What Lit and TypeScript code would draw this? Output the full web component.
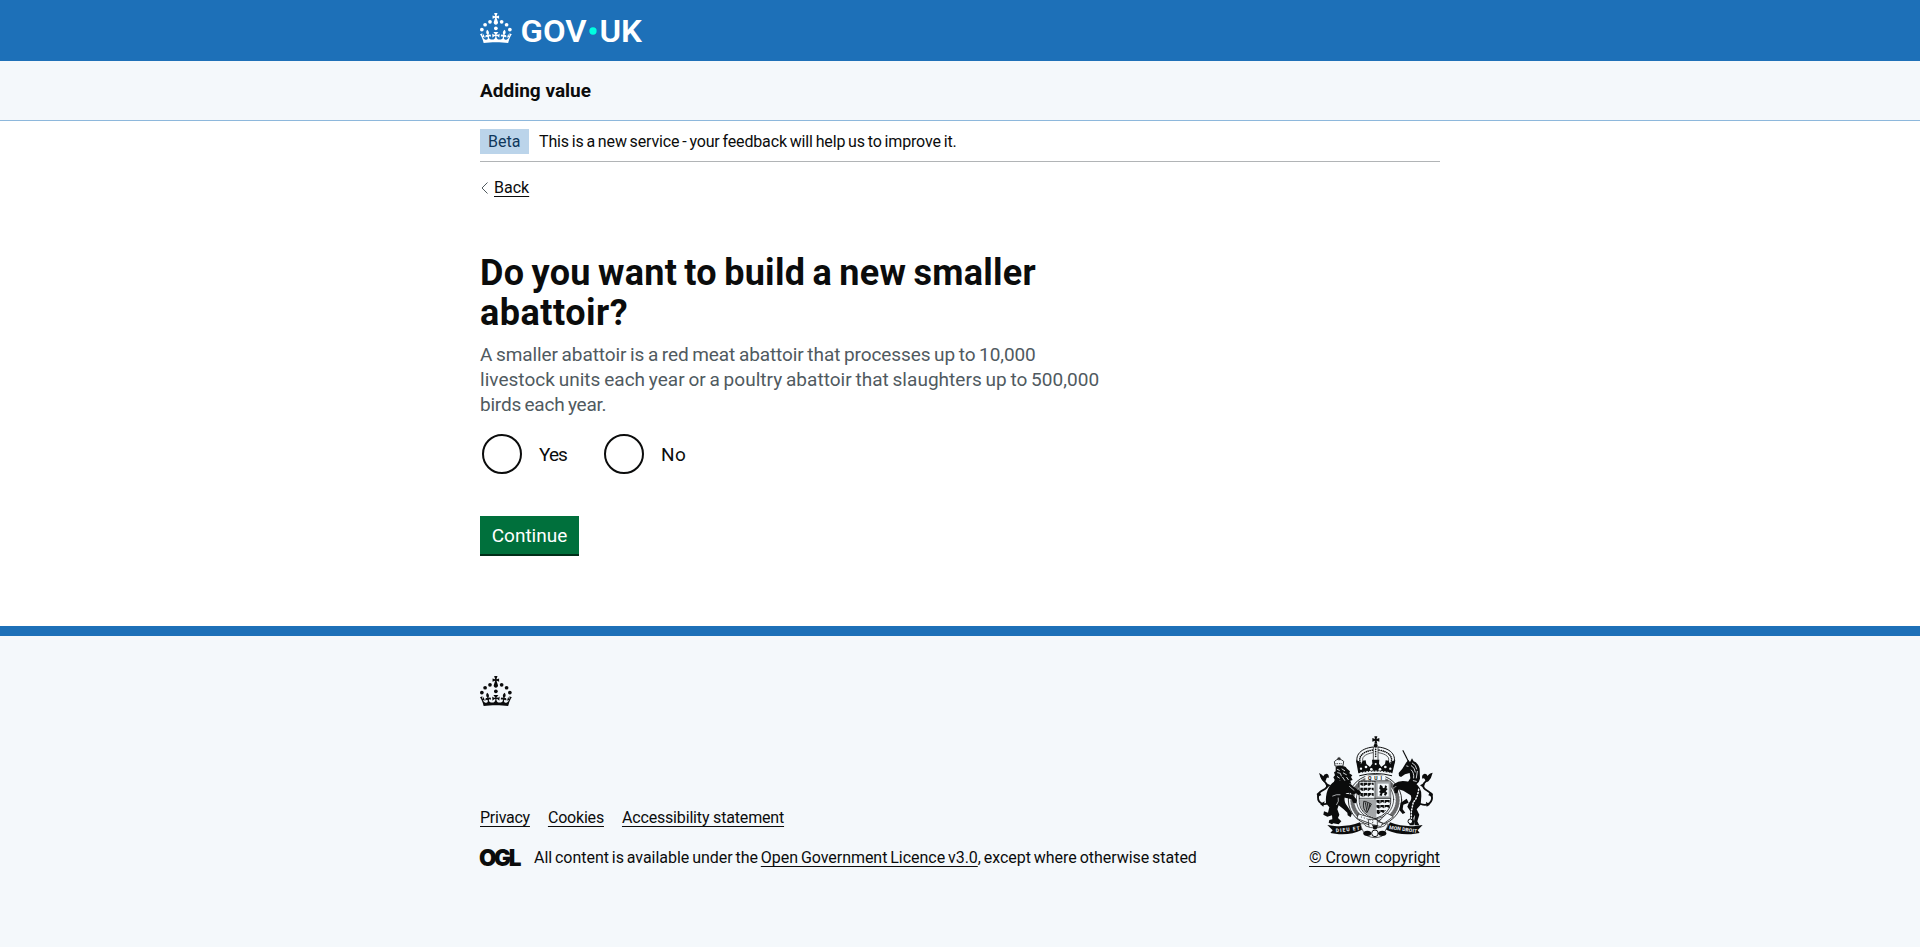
import { LitElement, html, css, svg } from "lit";
import { customElement, property } from "lit/decorators.js";

const crownShapes = svg`
  <circle cx="20" cy="17.6" r="3.7"></circle>
  <circle cx="10.2" cy="23.5" r="3.7"></circle>
  <circle cx="3.7" cy="33.2" r="3.7"></circle>
  <circle cx="31.7" cy="30.6" r="3.7"></circle>
  <circle cx="43.3" cy="17.6" r="3.7"></circle>
  <circle cx="53.2" cy="23.5" r="3.7"></circle>
  <circle cx="59.7" cy="33.2" r="3.7"></circle>
  <path d="M33.1,9.8c.2-.1.3-.3.5-.5l4.6,2.4v-6.8l-4.6,1.5c-.1-.2-.3-.3-.5-.5l1.9-5.9h-6.7l1.9,5.9c-.2.1-.3.3-.5.5l-4.6-1.5v6.8l4.6-2.4c.1.2.3.3.5.5l-2.6,8c-.9,2.8,1.2,5.7,4.1,5.7h0c3,0,5.1-2.9,4.1-5.7l-2.6-8ZM37,37.9s-3.4,3.8-4.1,6.1c2.2,0,4.2-.5,6.4-2.8l-.7,8.5c-2-2.8-4.4-4.1-5.7-3.8.1,3.1.5,6.7,5.8,7.2,3.7.3,6.7-1.5,7-3.8.4-2.6-2-4.3-3.7-1.6-1.4-4.5,2.4-6.1,4.9-3.2-1.9-4.5-1.8-7.7,2.4-10.9,3,4,2.6,7.3-1.2,11.1,2.4-1.3,6.2,0,4,4.6-1.2-2.8-3.7-2.2-4.2.2-.3,1.7.7,3.7,3,4.2,1.9.3,4.7-.9,7-5.9-1.3,0-2.4.7-3.9,1.7l2.4-8c.6,2.3,1.4,3.7,2.2,4.5.6-1.6.5-2.8,0-5.3l5,1.8c-2.6,3.6-5.2,8.7-7.3,17.5-7.4-1.1-15.7-1.7-24.5-1.7h0c-8.8,0-17.1.6-24.5,1.7-2.1-8.9-4.7-13.9-7.3-17.5l5-1.8c-.5,2.5-.6,3.7,0,5.3.8-.8,1.6-2.3,2.2-4.5l2.4,8c-1.5-1-2.6-1.7-3.9-1.7,2.3,5,5.2,6.2,7,5.9,2.3-.4,3.3-2.4,3-4.2-.5-2.4-3-3.1-4.2-.2-2.2-4.6,1.6-6,4-4.6-3.7-3.7-4.2-7.1-1.2-11.1,4.2,3.2,4.3,6.4,2.4,10.9,2.5-2.8,6.3-1.3,4.9,3.2-1.8-2.7-4.1-1-3.7,1.6.3,2.3,3.3,4.1,7,3.8,5.4-.5,5.7-4.2,5.8-7.2-1.3-.2-3.7,1-5.7,3.8l-.7-8.5c2.2,2.3,4.2,2.7,6.4,2.8-.7-2.3-4.1-6.1-4.1-6.1h10.6Z"></path>`;

@customElement("gov-crown")
class GovCrown extends LitElement {
  static styles = css`
    :host { display: block; width: 32px; height: 30px; }
    svg { display: block; fill: currentColor; }
  `;
  render() {
    return html`<svg width="32" height="30" viewBox="0 0 64 60">${crownShapes}</svg>`;
  }
}

@customElement("gov-logo")
class GovLogo extends LitElement {
  static styles = css`
    :host { display: block; }
    svg { display: block; fill: #fff; overflow: visible; }
    text { font: 600 62px Roboto, sans-serif; }
    .dot { fill: #00ffe0; }
  `;
  render() {
    return html`<svg width="162" height="30" viewBox="0 0 324 60">
      ${crownShapes}
      <text x="81" y="58" textLength="132" lengthAdjust="spacingAndGlyphs">GOV</text>
      <circle class="dot" cx="226" cy="36" r="7.3"></circle>
      <text x="239" y="58" textLength="85" lengthAdjust="spacingAndGlyphs">UK</text>
    </svg>`;
  }
}

@customElement("royal-arms")
class RoyalArms extends LitElement {
  static styles = css`
    :host { display: block; }
    svg { display: block; }
    .k { fill: #0b0c0c; }
    .w { fill: #f4f8fb; }
    .l { fill: none; stroke: #0b0c0c; stroke-linecap: round; stroke-linejoin: round; }
    .w.l { fill: #f4f8fb; }
    .p { fill: none; stroke: #f4f8fb; stroke-linecap: round; stroke-linejoin: round; }
    .g { fill: #a3a6a8; }
    text { font: 700 15px Roboto, sans-serif; }
  `;
  render() {
    return html`<svg width="118" height="103" viewBox="48 32 354 309">
      <!-- garter -->
      <ellipse class="w l" cx="225" cy="224" rx="80" ry="76" stroke-width="2.5"></ellipse>
      <ellipse class="l" cx="225" cy="224" rx="68" ry="66" stroke-width="12" stroke-dasharray="3.5 5" stroke-opacity=".6" stroke-linecap="butt"></ellipse>
      <ellipse class="w l" cx="225" cy="222" rx="56" ry="58" stroke-width="2"></ellipse>
      <rect class="w" x="196" y="150" width="60" height="15"></rect>
      <text class="k" x="204" y="163" textLength="42">QUI</text>

      <!-- shield -->
      <path class="w l" stroke-width="2.5" d="M178 168H272V232Q270 266 225 280Q180 266 178 232Z"></path>
      <path class="g" d="M226 168H272V220H226ZM179 222H224V278Q182 262 179 232Z"></path>
      <rect class="w" x="233" y="175" width="33" height="38"></rect>
      <path class="k" d="M181 172h40v8l-8-3-6 5-8-4-8 5-10-4zM181 187h40v9l-9-4-7 5-7-4-8 5-9-4zM181 203h40v10l-9-4-7 5-7-4-8 5-9-4z"></path>
      <path class="k" d="M229 224h40v8l-8-3-6 5-8-4-8 5-10-4zM229 239h39v9l-9-4-7 5-7-4-8 5-8-4zM230 254h28l-8 9-7-4-7 8-6-3z"></path>
      <path class="p" stroke-width="2" d="M190 170v44M203 170v44M214 170v44M240 223v36M253 223v34"></path>
      <path class="k" d="M240 178l7 4 2 7 5-2 1-7 6 3-2 6 4 2-6 7 5 5-5 8-5-2 2-7-6 1-3 9-7-2 4-7-5-3 5-6-4-4z"></path>
      <path class="l" stroke-width="2.5" d="M191 229q-4 24 10 33l13-26-16-7zM196 232l5 26M202 234l3 18M208 236l1 8"></path>
      <path class="l" stroke-width="2" d="M225 168V278M178 219H272"></path>
      <path class="g" d="M222 222h7v54l-4 3-3-3z"></path>

      <!-- crown -->
      <path class="k" d="M223 33h9l-2 8 8-3v11l-8-3 2 9h-9l2-9-8 3V38l8 3z"></path>
      <circle class="k" cx="227" cy="61" r="6"></circle>
      <path class="l" stroke-width="3" d="M177 124C160 96 176 69 220 65M277 124C294 96 278 69 234 65"></path>
      <path class="l" stroke-width="5" stroke-dasharray=".1 6" d="M184 118C171 96 186 79 218 74M270 118C283 96 268 79 236 74"></path>
      <path class="l" stroke-width="2" d="M191 112C180 96 196 86 218 82M263 112C274 96 258 86 236 82"></path>
      <path class="l" stroke-width="2" d="M220 66V104M234 66V104"></path>
      <path class="l" stroke-width="5" stroke-dasharray=".1 7" d="M227 72V100"></path>
      <path class="k" d="M168 105l10 3 5 9 5-11 9-1 2 11 11 9 7-10-1-12h22l-1 12 7 10 11-9 2-11 9 1 5 11 5-9 10-3-9 39q-49-11-102 0z"></path>
      <circle class="w" cx="198" cy="125" r="4"></circle><circle class="w" cx="256" cy="125" r="4"></circle>
      <circle class="w" cx="214" cy="132" r="4"></circle><circle class="w" cx="240" cy="132" r="4"></circle>
      <circle class="w" cx="183" cy="130" r="3.5"></circle><circle class="w" cx="271" cy="130" r="3.5"></circle>
      <circle class="w" cx="227" cy="116" r="3"></circle>
      <path class="p" stroke-width="3" stroke-dasharray="4 5" d="M181 143q46-11 92 0"></path>
      <path class="l" stroke-width="3" d="M179 151q48-13 96 0"></path>

      <!-- lion -->
      <path class="l" stroke-width="2.5" d="M105 121l-2-12q5-6 13-8 10 2 15 7l-2 13zM117 96v8M113 99h8"></path>
      <path class="l" stroke-width="3" stroke-dasharray=".1 5" d="M108 115h18"></path>
      <path class="k" d="M107 124q10-5 25-1 6 1 9 7l9 8-2 6 9 6-4 5 5 9-7 2 3 9-8-1-2 8-9-3-6 6-7-5-9 3-4-9-7-4 2-7-4-7 5-6-3-9 5-3z"></path>
      <path class="p" stroke-width="2.5" d="M112 132l6 3M126 131l8 5M113 142l8 2 3 8M130 143l9 5M112 154l6 4M128 156l6 9M140 156l5 7M120 166l4 6"></path>
      <path class="k" d="M104 168C120 162 148 168 158 182L180 198 184 204 176 210 168 204 158 208 150 202 138 204C130 220 134 232 140 240L148 252 156 264 152 276 143 270 142 262 131 252 116 240 112 252 118 268 114 278 124 288 116 297 100 294 96 297 86 292 88 284 97 282 96 270 82 274 70 268 72 258 84 262 88 246 78 234C76 206 84 180 104 168Z"></path>
      <path class="k" d="M128 204l30 4 13 16-3 10-9-2-4-10-26-6z"></path>
      <path class="p" stroke-width="2" d="M98 212q12-6 22-4M110 238q8-10 5-20M148 183l14 12"></path>
      <path class="l" stroke-width="5.5" d="M86 232C66 244 50 228 55 208C59 190 84 196 81 180C79 168 66 168 64 154"></path>
      <path class="k" d="M57 143q9 4 13 10 2-8 10-8 8 2 6 13-6-4-8 6-3 8-10 2-7-8-11-23zM50 206q10-10 14 4-6-1-10 8zM60 236l14-8-4 16zM76 172l16 8-12 8z"></path>

      <!-- unicorn -->
      <path class="l" stroke-width="3.5" stroke-linecap="butt" stroke-dasharray="4 1.2" d="M309 76L325 108"></path>
      <path class="k" d="M318 112l7-8 5 6 6-11 5 9q14 5 18 22l1 30q-2 12-12 18l-14 4-12-9 9-14-2-16-14 4-12 8-6-3-1-9 11-13z"></path>
      <path class="p" stroke-width="2.5" d="M337 113q12 6 13 18M334 121q11 6 12 19M334 134q9 8 7 24M352 138l-3 20M340 166l9 2M320 122l4 1"></path>
      <path class="k" d="M282 176Q298 164 318 168L344 172Q366 186 364 212L362 238 350 252 358 268 352 288 358 300 344 300 342 288 345 270 330 256 322 244 326 234Q338 222 332 210L310 196 296 192 292 204 284 204 282 190 290 182 278 186ZM326 232L310 238 308 252 316 262 308 266 298 254 302 232 320 220Z"></path>
      <path class="k" d="M336 256l14 4-10 18 3 14-2 8h-12l-2-8 6-5-2-14z"></path>
      <path class="l" stroke-width="5.5" d="M362 236C384 244 400 230 395 210C390 192 368 198 370 180C372 166 386 168 388 152"></path>
      <path class="k" d="M398 142q-12 2-15 10-4-8-11-6-8 3-5 14 6-4 9 5 3 8 10 2 8-8 12-25zM399 206q-10-10-14 4 7 0 10 8zM390 238l-12-9 2 15zM374 172l-14 8 11 8z"></path>
      <path class="l" stroke-width="8" d="M356 192Q352 220 340 230L334 258V282"></path>
      <path class="p" stroke-width="4.5" stroke-dasharray="3 6" d="M356 192Q352 220 340 230L334 258V282"></path>
      <circle class="w l" cx="331" cy="288" r="7" stroke-width="3"></circle>

      <!-- garter buckle -->
      <path class="w l" stroke-width="2" d="M176 266l48 14 24 14-6 10-22-6-48-18zM206 282h26v28l-12 6-12-8zM262 264l18 10-28 20-16-4z"></path>
      <path class="l" stroke-width="3" stroke-dasharray=".1 9" d="M184 275l42 14M218 292v18"></path>

      <!-- motto scroll -->
      <path class="k" d="M82 299l22 3q40 3 76-11l6 22q-36 18-80 12l-15-2 7-8zM368 299l-22 3q-40 3-76-11l-12 22q42 18 86 12l15-2-6-8z"></path>
      <path class="w l" stroke-width="2" d="M181 296q14-4 16 6 28 12 56 0 4-10 12-6-4 12-10 22l-8 14q-22 10-44 0-16-10-22-36z"></path>
      <ellipse class="k" cx="202" cy="324" rx="12" ry="8"></ellipse><ellipse class="k" cx="247" cy="324" rx="12" ry="8"></ellipse>
      <circle class="w l" cx="225" cy="324" r="10" stroke-width="3"></circle>
      <path class="k" d="M218 300h14l-2 12h-10z"></path>
      <text class="w" transform="translate(108 321) rotate(-6)" textLength="72">DIEU ET</text>
      <text class="w" transform="translate(267 311) rotate(8)" textLength="84">MON DROIT</text>
    </svg>`;
  }
}

@customElement("radio-option")
class RadioOption extends LitElement {
  @property() label = "";
  static styles = css`
    :host { display: flex; align-items: center; gap: 17px; }
    .ring { box-sizing: border-box; width: 40px; height: 40px; border: 2px solid #0b0c0c; border-radius: 50%; }
    .label { font-size: 19px; line-height: 25px; }
  `;
  render() {
    return html`<span class="ring"></span><span class="label">${this.label}</span>`;
  }
}

@customElement("app-root")
class AppRoot extends LitElement {
  static styles = css`
    :host {
      display: flex; flex-direction: column; min-height: 947px; background: #fff;
      color: #0b0c0c; font: 400 16px/20px Roboto, "Liberation Sans", sans-serif;
    }
    .wrap { width: 960px; margin: 0 auto; }
    .header { height: 61px; background: #1d70b8; }
    .header .wrap { padding-top: 13px; }
    .service { background: #f4f8fb; border-bottom: 1px solid #8eb8dc; }
    .service .wrap { height: 59px; display: flex; align-items: center; font-size: 19px; font-weight: 700; }
    .phase { display: flex; gap: 10px; padding: 8px 0 7px; border-bottom: 1px solid #b1b4b6; line-height: 25px; }
    .tag { box-sizing: border-box; width: 49px; padding: 0 8px; background: #bbd4ea; color: #0f385c; }
    .phase-text { letter-spacing: -0.14px; word-spacing: -1px; }
    .back { display: flex; align-items: center; gap: 5px; margin-top: 16px; }
    .chevron { margin-left: 1px; width: 8px; height: 12px; fill: none; stroke: #505a5f; stroke-width: 1; }
    a { color: inherit; text-decoration: underline; text-decoration-thickness: 1px; text-underline-offset: 3px; white-space: nowrap; }
    h1 { margin: 55px 0 9px; font-size: 36px; line-height: 40px; font-weight: 700; }
    .h-a { letter-spacing: 0.28px; word-spacing: -2px; }
    .h-b { letter-spacing: 0.5px; }
    .hint { color: #505a5f; font-size: 19px; line-height: 25px; white-space: nowrap; word-spacing: -1px; }
    .t1 { letter-spacing: -0.08px; }
    .t2 { letter-spacing: 0.03px; }
    .t3 { letter-spacing: -0.22px; }
    .radios { display: flex; margin: 17px 0 42px 2px; }
    .yes { width: 122px; letter-spacing: -0.9px; }
    .no { letter-spacing: 0.4px; }
    .button {
      display: block; box-sizing: border-box; width: 99px; height: 38px; padding: 2px 0 0; border: 0; background: #00703c; color: #fff;
      box-shadow: 0 2px 0 #002d18; font: 400 19px/36px Roboto, sans-serif; text-align: center;
    }
    .footer { flex: 1; margin-top: 72px; border-top: 10px solid #1d70b8; background: #f4f8fb; }
    .footer .wrap { padding-top: 40px; }
    .meta { display: flex; justify-content: space-between; align-items: flex-end; margin-top: 30px; }
    .links { display: flex; gap: 18px; margin-bottom: 20px; }
    .l1 { letter-spacing: -0.25px; }
    .l2 { letter-spacing: -0.2px; }
    .l3 { letter-spacing: -0.17px; }
    .licence { display: flex; align-items: center; gap: 11px; white-space: nowrap; letter-spacing: -0.04px; word-spacing: -1px; }
    .ogl { display: block; margin-left: -2px; fill: #0b0c0c; overflow: visible; }
    .ogl text { font: 900 22.5px Inter, sans-serif; letter-spacing: 0; word-spacing: 0; }
    .copyright { display: flex; flex-direction: column; align-items: center; gap: 9px; letter-spacing: -0.09px; }
  `;
  render() {
    return html`
      <header class="header"><div class="wrap"><gov-logo></gov-logo></div></header>
      <div class="service"><div class="wrap">Adding value</div></div>
      <div class="wrap">
        <div class="phase">
          <span class="tag">Beta</span>
          <span class="phase-text">This is a new service - your feedback will help us to improve it.</span>
        </div>
        <div class="back">
          <svg class="chevron" viewBox="0 0 8 12"><path d="M6.5 .5L1 6l5.5 5.5"></path></svg><a>Back</a>
        </div>
        <h1><span class="h-a">Do you want to build a new smaller</span><br /><span class="h-b">abattoir?</span></h1>
        <div class="hint">
          <span class="t1">A smaller abattoir is a red meat abattoir that processes up to 10,000</span><br />
          <span class="t2">livestock units each year or a poultry abattoir that slaughters up to 500,000</span><br />
          <span class="t3">birds each year.</span>
        </div>
        <div class="radios">
          <radio-option class="yes" label="Yes"></radio-option>
          <radio-option class="no" label="No"></radio-option>
        </div>
        <button class="button">Continue</button>
      </div>
      <footer class="footer">
        <div class="wrap">
          <gov-crown></gov-crown>
          <div class="meta">
            <div>
              <div class="links"><a class="l1">Privacy</a><a class="l2">Cookies</a><a class="l3">Accessibility statement</a></div>
              <div class="licence">
                <svg class="ogl" width="45" height="17" viewBox="0 0 45 17">
                  <text x="1" y="16" textLength="42.5">OGL</text>
                </svg>
                <span>All content is available under the <a>Open Government Licence v3.0</a>, except where otherwise stated</span>
              </div>
            </div>
            <div class="copyright"><royal-arms></royal-arms><a>© Crown copyright</a></div>
          </div>
        </div>
      </footer>
    `;
  }
}
